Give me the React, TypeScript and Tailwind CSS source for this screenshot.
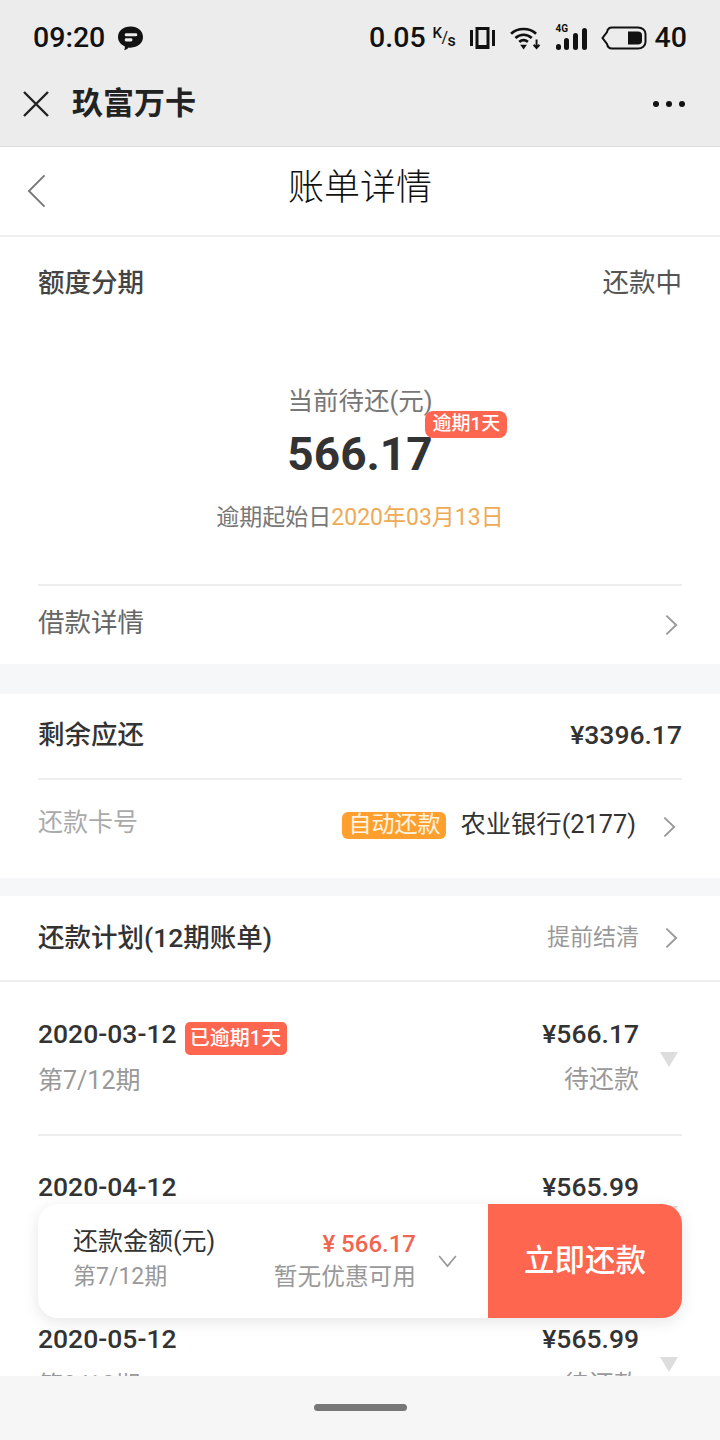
const fontStack = 'font-["Roboto","Noto_Sans_CJK_SC",sans-serif]';

function Chevron({ className }: { className?: string }) {
  return (
    <svg viewBox="0 0 16 24" className={className} fill="none" stroke="#999999" strokeWidth="2">
      <path d="M2.5 2 L13 12 L2.5 22" />
    </svg>
  );
}

function BubbleIcon() {
  return (
    <svg viewBox="0 0 28 26" className="w-[27px] h-[25px]">
      <path d="M14 0.5C21.6 0.5 27 5.2 27 11.5S21.6 22.5 14 22.5C13.3 22.5 12.6 22.4 12 22.3C11 23.6 9.4 24.8 7.2 25.2C8 23.9 8.3 22.4 8.1 21.2C3.7 19.4 1 15.8 1 11.5C1 5.2 6.4 0.5 14 0.5Z" fill="#111" />
      <rect x="8" y="7.5" width="13" height="3.2" rx="1.4" fill="#ececec" />
      <rect x="8" y="12.8" width="8" height="3.2" rx="1.4" fill="#ececec" />
    </svg>
  );
}

function StatusIcons() {
  return (
    <div className="flex items-center">
      <svg viewBox="0 0 25 24" className="w-[25px] h-[24px] ml-[13px]">
        <rect x="0" y="4" width="3" height="16" fill="#111" />
        <rect x="22" y="4" width="3" height="16" fill="#111" />
        <path d="M5.5 1H19.5V23H5.5ZM8.5 4V19H16.5V4Z" fill="#111" fillRule="evenodd" />
      </svg>
      <svg viewBox="0 0 32 26" className="w-[31px] h-[25px] ml-[15px]">
        <g fill="none" stroke="#111" strokeWidth="2.8">
          <path d="M1 8C8 1.5 20 1.5 27 8" />
          <path d="M5.5 12.5C10.5 8 17.5 8 22.5 12.5" />
          <path d="M9.5 16.5C12.5 14 15.5 14 18.5 16.5" />
        </g>
        <path d="M10.5 19.5H17.5L14 24.5Z" fill="#111" />
        <path d="M27.5 14V22M24.5 19.5L27.5 23L30.5 19.5" fill="none" stroke="#111" strokeWidth="2" />
      </svg>
      <div className="relative w-[31px] h-[24px] ml-[15px]">
        <span className="absolute left-0 -top-[3px] text-[10px] leading-[12px] font-bold text-[#111]">4G</span>
        <div className="absolute bottom-0 left-0 right-0 flex items-end justify-between">
          <div className="w-[5px] h-[6px] rounded-full bg-[#111]" />
          <div className="w-[5px] h-[12px] rounded-full bg-[#111]" />
          <div className="w-[5px] h-[17px] rounded-full bg-[#111]" />
          <div className="w-[5px] h-[22px] rounded-full bg-[#111]" />
        </div>
      </div>
      <svg viewBox="0 0 46 24" className="w-[46px] h-[24px] ml-[14px]">
        <path d="M6 6C6.5 3.5 8.5 1.5 11 1.5H37C41 1.5 44.5 4 44.5 8V16C44.5 20 41 22.5 37 22.5H11C8.5 22.5 6.5 20.5 6 18L1.5 12Z" fill="none" stroke="#111" strokeWidth="2" />
        <path d="M27 5.5H37C39.5 5.5 41 7 41 9V15C41 17 39.5 18.5 37 18.5H27Z" fill="#111" />
      </svg>
      <span className="text-[28.5px] leading-none font-medium text-[#111] ml-[8px]">40</span>
    </div>
  );
}

function PlanRow({ rowClass, date, amount, period, badge, divider }: { rowClass: string; date: string; amount: string; period: string; badge?: string; divider?: boolean }) {
  return (
    <div className={`mx-[38px] shrink-0 relative ${rowClass} ${divider ? 'border-b-2 border-[#eeeeee]' : ''}`}>
      <div className="flex items-center justify-between pr-[43px] h-[32px]">
        <div className="flex items-center">
          <span className="text-[26.5px] font-medium text-[#333333]">{date}</span>
          {badge && (
            <span className="ml-[8px] h-[33px] w-[102px] mt-[8px] rounded-[5px] bg-[#ff6650] text-white text-[20px] font-medium flex items-center justify-center">
              {badge}
            </span>
          )}
        </div>
        <span className="text-[26.5px] font-medium text-[#333333]">{amount}</span>
      </div>
      <div className="flex items-center justify-between pr-[43px] mt-[13px] h-[36px]">
        <span className="text-[25px] text-[#999999]">{period}</span>
        <span className="text-[25px] text-[#999999] -mt-[2px]">待还款</span>
      </div>
      <svg viewBox="0 0 18 15" className="absolute right-[4px] top-[70px] w-[18px] h-[15px]">
        <path d="M0 0H18L9 15Z" fill="#dddddd" />
      </svg>
    </div>
  );
}

export default function App() {
  return (
    <div className={`relative w-[720px] h-[1440px] overflow-hidden bg-white flex flex-col ${fontStack}`}>
      {/* system header */}
      <div className="h-[147px] shrink-0 bg-[#ececec] border-b border-[#dddddd]">
        <div className="h-[76px] pl-[33px] pr-[33px] flex items-center justify-between">
          <div className="flex items-center">
            <span className="text-[28.5px] leading-none font-medium text-[#111]">09:20</span>
            <div className="ml-[12px]"><BubbleIcon /></div>
          </div>
          <div className="flex items-center">
            <span className="text-[28.5px] leading-none font-medium text-[#111]">0.05</span>
            <span className="ml-[7px] w-[24px] h-[24px] relative text-[#111] font-medium leading-none">
              <span className="absolute left-0 top-0 text-[15px]">K</span>
              <span className="absolute left-[9px] top-[4px] text-[16px] font-normal">/</span>
              <span className="absolute left-[15px] top-[7px] text-[16px]">s</span>
            </span>
            <StatusIcons />
          </div>
        </div>
        <div className="h-[56px] pl-[23px] pr-[35px] flex items-center justify-between">
          <div className="flex items-center">
            <svg viewBox="0 0 26 26" className="w-[26px] h-[26px]" fill="none" stroke="#222222" strokeWidth="2.4">
              <path d="M1 1 L25 25 M25 1 L1 25" />
            </svg>
            <span className="ml-[23px] text-[31px] font-bold text-[#222222]">玖富万卡</span>
          </div>
          <div className="flex items-center gap-[7px]">
            <div className="w-[6px] h-[6px] rounded-full bg-[#111]" />
            <div className="w-[6px] h-[6px] rounded-full bg-[#111]" />
            <div className="w-[6px] h-[6px] rounded-full bg-[#111]" />
          </div>
        </div>
      </div>

      {/* page title */}
      <div className="relative h-[90px] shrink-0 border-b-2 border-[#eeeeee] flex items-center justify-center">
        <svg viewBox="0 0 20 36" className="absolute left-[27px] top-[27px] w-[19px] h-[34px]" fill="none" stroke="#777777" strokeWidth="2">
          <path d="M18.5 1.5 L2 18 L18.5 34.5" />
        </svg>
        <span className="text-[36px] font-light text-[#111111] -mt-[6px]">账单详情</span>
      </div>

      <div className="flex-1 min-h-0 overflow-hidden">
        {/* summary */}
        <div className="h-[427px] px-[38px] flex flex-col">
          <div className="flex items-center justify-between h-[92px] shrink-0">
            <span className="text-[26.5px] font-medium text-[#444444]">额度分期</span>
            <span className="text-[26.5px] text-[#555555]">还款中</span>
          </div>
          <div className="flex flex-col items-center mt-[54px]">
            <span className="text-[25.5px] leading-[36px] text-[#777777]">当前待还(元)</span>
            <div className="relative mt-[5px] h-[60px] flex items-center">
              <span className="text-[46px] font-bold text-[#333333] leading-none">566.17</span>
              <span className="absolute left-[138px] -top-[13px] h-[27px] w-[82px] rounded-[8px] bg-[#ff6650] text-white text-[19px] font-medium flex items-center justify-center">
                逾期1天
              </span>
            </div>
            <div className="mt-[17px] text-[23px] leading-[34px] text-[#777777]">
              逾期起始日<span className="text-[#efaa55]">2020年03月13日</span>
            </div>
          </div>
          <div className="mt-[49px] pb-[4px] border-t-2 border-[#eeeeee] flex-1 flex items-center justify-between pr-[3px]">
            <span className="text-[26.5px] text-[#666666]">借款详情</span>
            <Chevron className="w-[15px] h-[24px] mt-[4px]" />
          </div>
        </div>

        <div className="h-[30px] bg-[#f6f7f9]" />

        {/* remaining + card */}
        <div className="px-[38px]">
          <div className="h-[86px] pb-[2px] border-b-2 border-[#eeeeee] flex items-center justify-between">
            <span className="text-[26.5px] font-medium text-[#333333]">剩余应还</span>
            <span className="text-[26.5px] font-medium text-[#333333]">¥3396.17</span>
          </div>
          <div className="h-[98px] pb-[8px] flex items-center justify-between pr-[5px]">
            <span className="text-[25px] text-[#aaaaaa] -mt-[5px]">还款卡号</span>
            <div className="flex items-center">
              <span className="h-[27px] w-[104px] rounded-[6px] bg-[#ffa02e] text-[#fff4e0] text-[23px] flex items-center justify-center">自动还款</span>
              <span className="ml-[14px] text-[25.3px] text-[#333333]">农业银行(2177)</span>
              <Chevron className="w-[15px] h-[24px] ml-[26px] mt-[3px]" />
            </div>
          </div>
        </div>

        <div className="h-[18px] bg-[#f6f7f9]" />

        {/* plan */}
        <div className="h-[86px] border-b-2 border-[#eeeeee] px-[38px] flex items-center justify-between">
          <span className="text-[26.5px] font-medium text-[#333333]">还款计划(12期账单)</span>
          <div className="flex items-center pr-[3px]">
            <span className="text-[23px] text-[#999999]">提前结清</span>
            <Chevron className="w-[15px] h-[24px] ml-[25px]" />
          </div>
        </div>

        <PlanRow rowClass="h-[154px] pt-[36px]" date="2020-03-12" amount="¥566.17" period="第7/12期" badge="已逾期1天" divider />
        <PlanRow rowClass="h-[151px] pt-[35px]" date="2020-04-12" amount="¥565.99" period="第8/12期" divider />
        <PlanRow rowClass="h-[153px] pt-[36px]" date="2020-05-12" amount="¥565.99" period="第9/12期" />
      </div>

      {/* bottom gesture bar */}
      <div className="h-[64px] shrink-0 bg-[#f6f6f6] flex items-center justify-center">
        <div className="w-[93px] h-[7px] -mt-[1px] rounded-full bg-[#777777]" />
      </div>

      {/* floating pay card */}
      <div className="absolute left-[38px] bottom-[122px] w-[644px] h-[114px] rounded-[20px] bg-white shadow-[0_4px_16px_rgba(0,0,0,0.1)] overflow-hidden flex">
        <div className="w-[450px] pl-[35px] pr-[31px] flex items-center justify-between">
          <div className="flex flex-col -mt-[4px]">
            <span className="text-[25px] leading-[36px] text-[#333333]">还款金额(元)</span>
            <span className="text-[23px] leading-[34px] text-[#999999]">第7/12期</span>
          </div>
          <div className="flex items-center">
            <div className="flex flex-col items-end -mt-[2px]">
              <span className="text-[24px] leading-[34px] font-medium text-[#f0654f]">¥ 566.17</span>
              <span className="text-[23.7px] leading-[32px] text-[#999999]">暂无优惠可用</span>
            </div>
            <svg viewBox="0 0 20 14" className="w-[19px] h-[13px] ml-[22px]" fill="none" stroke="#999999" strokeWidth="1.8">
              <path d="M1 1 L10 12 L19 1" />
            </svg>
          </div>
        </div>
        <div className="flex-1 bg-[#ff6650] flex items-center justify-center">
          <span className="text-[30.5px] font-medium text-white">立即还款</span>
        </div>
      </div>
    </div>
  );
}
